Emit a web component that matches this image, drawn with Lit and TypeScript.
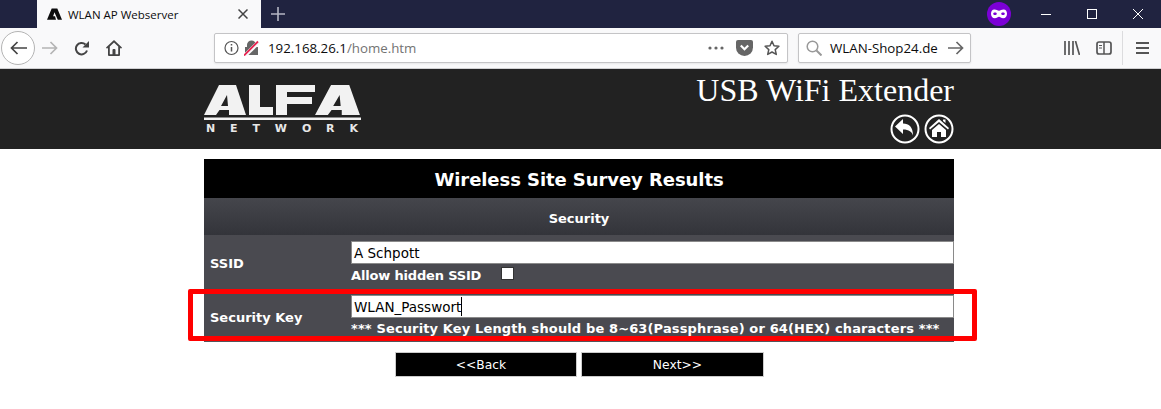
import { LitElement, html, css, svg } from "lit";
import { customElement } from "lit/decorators.js";

const ic = (w: number, h: number, body: unknown, vb = `0 0 ${w} ${h}`) =>
  html`<svg width=${w} height=${h} viewBox=${vb} style="display:block;flex:none">${body}</svg>`;

const alfaA = "M0 30 15 0H32L42 30H25V25H15.500L12 30zM23 10 17 21H24z";

@customElement("app-root")
export class AppRoot extends LitElement {
  static styles = css`
    :host { display: block; width: 1161px; height: 409px; overflow: hidden; position: relative; background: #fff; font-family: "DejaVu Sans", sans-serif; }
    * { box-sizing: border-box; }
    .tabs { height: 28px; background: #202340; display: flex; align-items: center; }
    .tab { margin-left: 37px; width: 224px; height: 28px; background: #f9f9fa; display: flex; align-items: center; padding: 0 13px 0 10px; font: 11.5px "Open Sans", sans-serif; color: #0c0c0d; }
    .tab .name { margin-left: 6px; flex: 1; }
    .plus { margin-left: 10px; }
    .grow { flex: 1; }
    .mask { margin-right: 12px; }
    .win { display: flex; align-items: center; justify-content: center; width: 46px; height: 28px; }
    .toolbar { height: 41px; background: #f9f9fa; border-bottom: 1px solid #d0d0d2; display: flex; align-items: center; position: relative; }
    .back { margin-left: 1px; width: 34px; height: 34px; border: 1px solid #b4b4b4; border-radius: 50%; background: #fff; display: flex; align-items: center; justify-content: center; }
    .tb { display: flex; align-items: center; justify-content: center; width: 32px; height: 32px; }
    .tb.fwd { margin-left: -1px; }
    .urlbar, .search { height: 30px; background: #fff; border: 1px solid #c4c4c6; border-radius: 2px; display: flex; align-items: center; font: 13.3px "Open Sans", sans-serif; box-shadow: 0 1px 2px rgba(0,0,0,.08); }
    .urlbar { margin-left: 84px; width: 574px; padding-left: 9px; }
    .url { margin-left: 8px; flex: 1; color: #0c0c0d; }
    .url span { color: #737373; }
    .search { margin-left: 10px; width: 173px; padding: 0 6px 0 7px; color: #0c0c0d; }
    .search .txt { margin-left: 8px; flex: 1; }
    .sep { width: 1px; height: 34px; background: #dcdcde; margin-left: 2px; }
    .menu { margin-left: 3px; }
    .spacer-r { width: 85px; }
    .g4 { width: 4px; } .g11 { width: 11px; } .g12 { width: 12px; } .g7 { width: 7px; }
    .header { height: 80px; background: #222; display: flex; }
    .hinner { width: 750px; margin-left: 204px; display: flex; justify-content: space-between; }
    .logo { margin-top: 16px; display: block; }
    .hright { display: flex; flex-direction: column; align-items: flex-end; padding-top: 3px; }
    .htitle { font: 32px/36px "Liberation Serif", serif; color: #fff; }
    .hicons { display: flex; gap: 4px; margin-top: 6px; }
    .main { width: 750px; margin: 10px 0 0 204px; }
    .title { height: 39px; background: #000; color: #fff; font: bold 18px/41px "DejaVu Sans", sans-serif; letter-spacing: -.07px; text-align: center; }
    .section { height: 37px; background: linear-gradient(#45464c, #33343a); color: #fff; font: bold 13px/42px "DejaVu Sans", sans-serif; text-align: center; }
    .row { display: grid; grid-template-columns: 147px 1fr; background: #4a4a50; color: #fff; font: bold 13px "DejaVu Sans", sans-serif; }
    .row.a { height: 58px; }
    .row.b { height: 49px; border-bottom: 1px solid #55555a; }
    .label { padding-left: 6px; display: flex; align-items: center; }
    .row.a .label { padding-bottom: 2px; }
    .row.a .cell { padding-top: 6px; }
    .row.b .cell { padding-top: 2px; }
    .field { height: 23px; background: #fff; border: 1px solid #8a8a8a; color: #000; font: 13.5px/23px "DejaVu Sans", sans-serif; padding-left: 2px; display: flex; }
    .caret { width: 1px; height: 19px; background: #000; margin-top: 1px; }
    .line { display: flex; align-items: center; height: 22px; letter-spacing: -.17px; }
    .check { appearance: none; width: 13px; height: 13px; margin: 0 0 3px 20px; background: #fff; border: 1px solid #333; border-radius: 0; display: block; }
    .note { line-height: 21px; white-space: nowrap; letter-spacing: .01em; }
    .btns { display: flex; gap: 4px; margin: 10px 0 0 191px; }
    .btn { width: 183px; height: 25px; background: #000; border: 1px solid #ccc; color: #fff; font: 12.3px/21px "DejaVu Sans", sans-serif; text-align: center; padding: 2px 0 0 10px; }
    .btn.first { width: 182px; padding: 2px 10px 0 0; }
    .mark { position: absolute; left: 188px; top: 289px; width: 789px; height: 52px; border: 5px solid #f00; border-radius: 2px; pointer-events: none; }
  `;

  render() {
    return html`
      <div class="tabs">
        <div class="tab">
          ${ic(15, 12, svg`<path fill="#0c0c0d" d="M0 12 5 0h6l5 12h-4.500L9 6.500 8 4 6.500 8.500H8.600l1 3.500H0z"/>`, "0 0 16 12")}
          <span class="name">WLAN AP Webserver</span>
          ${ic(10, 10, svg`<path stroke="#444" stroke-width="1.500" d="M.5.5l9 9m0-9l-9 9"/>`)}
        </div>
        <div class="plus">${ic(14, 14, svg`<path stroke="#b5b7c4" stroke-width="1.600" d="M7 0v14M0 7h14"/>`)}</div>
        <div class="grow"></div>
        <div class="mask">${ic(24, 24, svg`<circle cx="12" cy="12" r="12" fill="#7b00d6"/><path fill="#fff" fill-rule="evenodd" d="M7.500 7.500c2 0 3 1.200 4.500 1.200s2.500-1.200 4.500-1.200c2.500 0 3.500 2 3.500 4.300 0 2.600-1.500 4.500-3.800 4.500-2.200 0-2.900-1.600-4.200-1.600s-2 1.600-4.200 1.600C5.500 16.300 4 14.400 4 11.800 4 9.500 5 7.500 7.500 7.500zM8 10.500c-1 0-1.800.5-1.800 1.200S7 13 8 13s1.800-.6 1.800-1.300S9 10.500 8 10.500zm8 0c-1 0-1.800.5-1.800 1.200S15 13 16 13s1.800-.6 1.800-1.300-.8-1.200-1.800-1.200z"/>`)}</div>
        <div class="win">${ic(10, 10, svg`<path stroke="#fff" d="M0 5.500h10"/>`)}</div>
        <div class="win">${ic(10, 10, svg`<rect x=".5" y=".5" width="9" height="9" fill="none" stroke="#fff"/>`)}</div>
        <div class="win">${ic(10, 10, svg`<path stroke="#fff" d="M0 0l10 10M10 0L0 10"/>`)}</div>
      </div>
      <div class="toolbar">
        <div class="back">${ic(17, 14, svg`<path fill="none" stroke="#444" stroke-width="1.700" d="M17 7H1.500M7.500 1 1.500 7l6 6"/>`)}</div>
        <div class="tb fwd">${ic(16, 14, svg`<path fill="none" stroke="#b4b4b4" stroke-width="1.700" d="M0 7h14.500M8.500 1l6 6-6 6"/>`)}</div>
        <div class="tb">${ic(16, 15, svg`<path fill="none" stroke="#444" stroke-width="2" d="M13 9.500A5.700 5.700 0 1 1 11.500 3.500"/><path fill="#444" d="M15 0v6.500H8.500z"/>`)}</div>
        <div class="tb">${ic(16, 16, svg`<path fill="#444" fill-rule="evenodd" d="M8 0 16 7.500l-1 1.200-1-.9V15a1 1 0 0 1-1 1H3a1 1 0 0 1-1-1V7.800l-1 .9L0 7.500zM8 2.500 3.800 6.400V14.300h2.700V10a1 1 0 0 1 1-1h1a1 1 0 0 1 1 1v4.300h2.700V6.400z"/>`)}</div>
        <div class="urlbar">
          ${ic(16, 16, svg`<circle cx="7.500" cy="8" r="6.500" fill="none" stroke="#555" stroke-width="1.200"/><path stroke="#555" stroke-width="1.500" d="M7.500 7v4.500M7.500 4v1.600"/>`)}
          <div class="g4"></div>
          ${ic(16, 16, svg`<path fill="#666" d="M3 7V5a4.500 4.500 0 0 1 9 0v2h2v8H1V7z"/><path stroke="#f9f9fa" stroke-width="4" d="M1 15.500 15 2"/><path stroke="#e8214f" stroke-width="1.800" d="M0 15.500 14 1.500"/>`)}
          <div class="url">192.168.26.1<span>/home.htm</span></div>
          ${ic(16, 4, svg`<g fill="#666"><circle cx="2" cy="2" r="1.600"/><circle cx="8" cy="2" r="1.600"/><circle cx="14" cy="2" r="1.600"/></g>`)}
          <div class="g12"></div>
          ${ic(17, 16, svg`<path fill="#666" d="M2 0h13a2 2 0 0 1 2 2v5.500a8.500 8.500 0 0 1-17 0V2a2 2 0 0 1 2-2z"/><path fill="none" stroke="#fff" stroke-width="2.200" d="M4.800 5.500 8.500 9.200l3.700-3.700"/>`)}
          <div class="g11"></div>
          ${ic(16, 16, svg`<path fill="none" stroke="#555" stroke-width="1.500" stroke-linejoin="round" d="M8 1.300 10 5.800l4.900.5-3.700 3.300 1.100 4.800L8 12l-4.300 2.400 1.100-4.800L1.100 6.300 6 5.800z"/>`)}
          <div class="g7"></div>
        </div>
        <div class="search">
          ${ic(16, 16, svg`<circle cx="6.500" cy="6.500" r="5.300" fill="none" stroke="#999" stroke-width="1.500"/><path stroke="#999" stroke-width="2" d="M10.500 10.500 15.500 15.500"/>`)}
          <span class="txt">WLAN-Shop24.de</span>
          ${ic(16, 14, svg`<path fill="none" stroke="#666" stroke-width="1.700" d="M0 7h14.500M8.500 1l6 6-6 6"/>`)}
        </div>
        <div class="spacer-r"></div>
        <div class="tb">${ic(16, 14, svg`<path stroke="#555" stroke-width="1.700" d="M1 0v14M5 0v14M9 0v14M11.500 0 15.500 14"/>`)}</div>
        <div class="tb">${ic(16, 14, svg`<rect x="1" y="1" width="14" height="12" rx="2" fill="none" stroke="#555" stroke-width="1.700"/><path stroke="#555" stroke-width="1.500" d="M8 1v12"/><path stroke="#555" d="M3 4.500h3M3 7h3"/>`)}</div>
        <div class="sep"></div>
        <div class="tb menu">${ic(13, 12, svg`<path stroke="#555" stroke-width="2" d="M0 1h13M0 6h13M0 11h13"/>`)}</div>
      </div>
      <div class="header">
        <div class="hinner">
          <svg class="logo" width="157" height="54" viewBox="0 0 157 54" role="img" aria-label="ALFA Network">
            <g fill="#f2f2f2" fill-rule="evenodd">
              <path d=${alfaA}/>
              <path d="M45 0H56V22H69V30H45z"/>
              <path d="M72 0H111V7H83V12H108V19H83V30H72z"/>
              <path transform="translate(111 0) scale(1.070 1)" d=${alfaA}/>
              <path d="M0 32.500H157V35H0z"/>
            </g>
            <text x="2" y="47" fill="#e8e8e8" font-family="DejaVu Sans, sans-serif" font-weight="bold" font-size="11" textLength="152">NETWORK</text>
          </svg>
          <div class="hright">
            <div class="htitle">USB WiFi Extender</div>
            <div class="hicons">
              ${ic(30, 30, svg`<circle cx="15" cy="15" r="13.500" fill="none" stroke="#fff" stroke-width="2"/><path fill="#fff" d="M5 12.500 13 5v4.500c6 0 10 3.500 10 12-1-3.500-4-6-10-6V20z"/>`)}
              ${ic(30, 30, svg`<circle cx="15" cy="15" r="13.500" fill="none" stroke="#fff" stroke-width="2"/><path fill="#fff" d="M15 5 25 14l-1 1.500L15 8 6 15.500 5 14zM19 5.500h2.500V9L19 7z"/><path fill="#fff" d="M15 10l7 6v7h-5v-5h-4v5H8v-7z"/>`)}
            </div>
          </div>
        </div>
      </div>
      <div class="main">
        <div class="title">Wireless Site Survey Results</div>
        <div class="section">Security</div>
        <div class="row a">
          <div class="label">SSID</div>
          <div class="cell">
            <div class="field">A Schpott</div>
            <div class="line"><span>Allow hidden SSID</span><input class="check" type="checkbox" /></div>
          </div>
        </div>
        <div class="row b">
          <div class="label">Security Key</div>
          <div class="cell">
            <div class="field">WLAN_Passwort<span class="caret"></span></div>
            <div class="note">*** Security Key Length should be 8~63(Passphrase) or 64(HEX) characters ***</div>
          </div>
        </div>
        <div class="btns">
          <button class="btn first">&lt;&lt;Back</button>
          <button class="btn">Next&gt;&gt;</button>
        </div>
      </div>
      <div class="mark"></div>
    `;
  }
}
